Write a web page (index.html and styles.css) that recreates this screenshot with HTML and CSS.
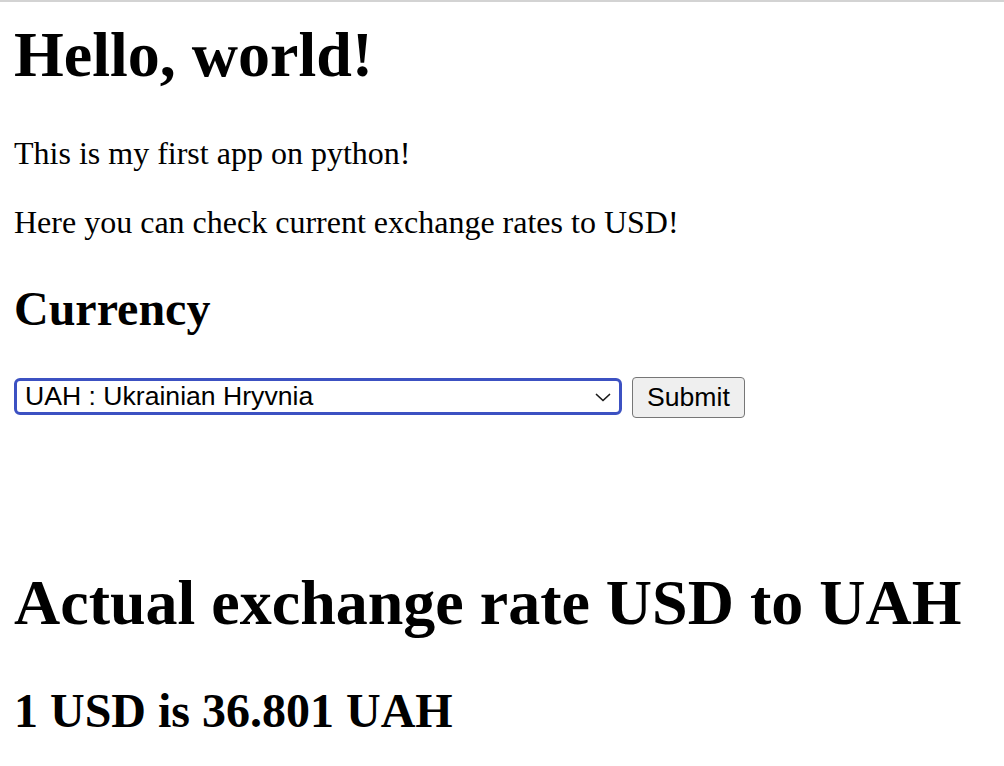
FILE: index.html
```html
<!DOCTYPE html>
<html>
<head>
<meta charset="utf-8">
<title>Exchange rates</title>
<link rel="stylesheet" href="styles.css">
</head>
<body>
<div class="topline"></div>
<main class="page">
  <h1 class="title">Hello, world!</h1>
  <p class="text">This is my first app on python!</p>
  <p class="text">Here you can check current exchange rates to USD!</p>
  <h2 class="subtitle">Currency</h2>
  <form class="form">
    <div class="select">
      <span class="select-value">UAH : Ukrainian Hryvnia</span>
      <svg class="chevron" width="16" height="9" viewBox="0 0 16 9"><path d="M1.5 1.5 L8 7.5 L14.5 1.5" fill="none" stroke="#1a1a1a" stroke-width="1.7" stroke-linecap="round" stroke-linejoin="round"/></svg>
    </div>
    <button type="button" class="btn">Submit</button>
  </form>
  <h1 class="result">Actual exchange rate USD to UAH</h1>
  <h2 class="rate">1 USD is 36.801 UAH</h2>
</main>
</body>
</html>
```
FILE: styles.css
```css
html, body {
  margin: 0;
  padding: 0;
  background: #ffffff;
}
body {
  font-family: "Liberation Serif", "Times New Roman", serif;
  color: #000;
}
.topline {
  height: 2px;
  background: #d3d3d3;
}
.page {
  padding: 16px 14px 0 14px;
}
.title {
  font-size: 64px;
  font-weight: bold;
  line-height: normal;
  margin: 0 0 43px 0;
}
.text {
  font-size: 32px;
  line-height: normal;
  margin: 0 0 32px 0;
}
.subtitle {
  font-size: 48px;
  font-weight: bold;
  line-height: normal;
  margin: 40px 0 40px 0;
}
.form {
  display: flex;
  align-items: flex-start;
  gap: 10px;
  padding-top: 1px;
  margin: 0;
  font-family: "Liberation Sans", Arial, sans-serif;
  font-size: 26.6px;
}
.select {
  box-sizing: border-box;
  width: 608px;
  height: 37px;
  margin-top: 1px;
  border: 3px solid #3c51c2;
  border-radius: 6px;
  background: #fff;
  display: flex;
  align-items: center;
  justify-content: space-between;
  padding: 0 8px 0 8px;
  color: #000;
}
.select-value {
  line-height: 1;
}
.chevron {
  display: block;
  margin-top: 1px;
}
.btn {
  box-sizing: border-box;
  height: 41px;
  padding: 0 14px;
  font-family: "Liberation Sans", Arial, sans-serif;
  font-size: 26.6px;
  color: #000;
  background: #efefef;
  border: 1.5px solid #767676;
  border-radius: 4px;
}
.result {
  font-size: 64px;
  font-weight: bold;
  line-height: normal;
  margin: 148px 0 43px 0;
}
.rate {
  font-size: 48px;
  font-weight: bold;
  line-height: normal;
  margin: 0;
}
```
